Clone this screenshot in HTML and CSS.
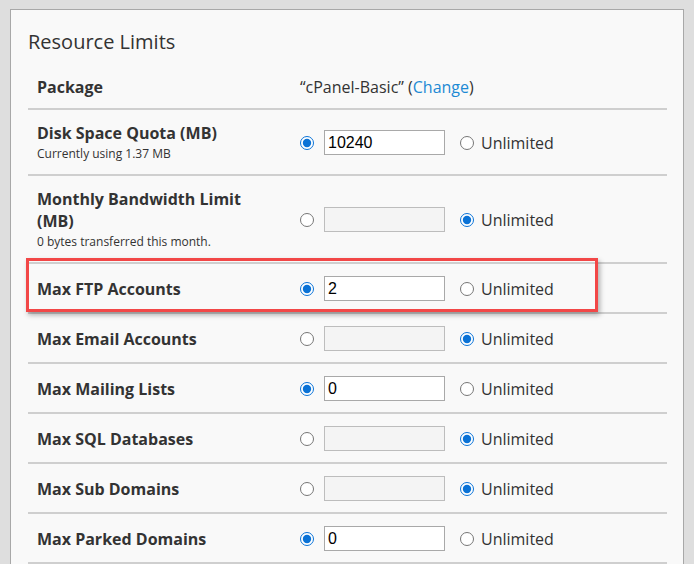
FILE: index.html
```html
<!DOCTYPE html>
<html lang="en">
<head>
    <meta charset="UTF-8">
    <meta name="viewport" content="width=device-width, initial-scale=1.0">
    <title>Resource Limits</title>
    <link rel="stylesheet" href="styles.css">
</head>
<body>
    <div class="panel">
        <h2 class="panel-title">Resource Limits</h2>
        <div class="limits">
            <div class="row row-package">
                <div class="label"><strong>Package</strong></div>
                <div class="value">“cPanel-Basic” (<a href="#">Change</a>)</div>
            </div>
            <div class="row">
                <div class="label">
                    <strong>Disk Space Quota (MB)</strong>
                    <small>Currently using 1.37 MB</small>
                </div>
                <div class="value">
                    <input type="radio" name="disk" checked>
                    <input type="text" class="num" value="10240">
                    <label><input type="radio" name="disk"> Unlimited</label>
                </div>
            </div>
            <div class="row">
                <div class="label">
                    <strong>Monthly Bandwidth Limit (MB)</strong>
                    <small>0 bytes transferred this month.</small>
                </div>
                <div class="value">
                    <input type="radio" name="bw">
                    <input type="text" class="num" disabled>
                    <label><input type="radio" name="bw" checked> Unlimited</label>
                </div>
            </div>
            <div class="row highlight">
                <div class="label"><strong>Max FTP Accounts</strong></div>
                <div class="value">
                    <input type="radio" name="ftp" checked>
                    <input type="text" class="num" value="2">
                    <label><input type="radio" name="ftp"> Unlimited</label>
                </div>
            </div>
            <div class="row">
                <div class="label"><strong>Max Email Accounts</strong></div>
                <div class="value">
                    <input type="radio" name="email">
                    <input type="text" class="num" disabled>
                    <label><input type="radio" name="email" checked> Unlimited</label>
                </div>
            </div>
            <div class="row">
                <div class="label"><strong>Max Mailing Lists</strong></div>
                <div class="value">
                    <input type="radio" name="lists" checked>
                    <input type="text" class="num" value="0">
                    <label><input type="radio" name="lists"> Unlimited</label>
                </div>
            </div>
            <div class="row">
                <div class="label"><strong>Max SQL Databases</strong></div>
                <div class="value">
                    <input type="radio" name="sql">
                    <input type="text" class="num" disabled>
                    <label><input type="radio" name="sql" checked> Unlimited</label>
                </div>
            </div>
            <div class="row">
                <div class="label"><strong>Max Sub Domains</strong></div>
                <div class="value">
                    <input type="radio" name="sub">
                    <input type="text" class="num" disabled>
                    <label><input type="radio" name="sub" checked> Unlimited</label>
                </div>
            </div>
            <div class="row">
                <div class="label"><strong>Max Parked Domains</strong></div>
                <div class="value">
                    <input type="radio" name="parked" checked>
                    <input type="text" class="num" value="0">
                    <label><input type="radio" name="parked"> Unlimited</label>
                </div>
            </div>
        </div>
    </div>
</body>
</html>
```

FILE: styles.css
```css
html {
    overflow: hidden;
}
body {
    font-family: "Open Sans", Arial, sans-serif;
    background-color: #dedede;
    color: #333;
    margin: 9px 10px 0;
}
.panel {
    background: #f9f9f9;
    border: 1px solid #a8a8a8;
    padding: 18px 16px 30px 17px;
}
.panel-title {
    font-size: 20px;
    font-weight: 400;
    line-height: 28px;
    margin: 0 0 8px;
}
.row {
    display: grid;
    grid-template-columns: 263px 1fr;
    align-items: center;
    border-bottom: 2px solid #cfcfcf;
}
.row > div {
    padding: 12px 9px 11px;
}
.row-package > div {
    padding-bottom: 10px;
}
.label strong {
    display: block;
    font-size: 16px;
    font-weight: 700;
    line-height: 22px;
    max-width: 230px;
}
.label small {
    display: block;
    font-size: 12px;
    line-height: 18px;
    margin-top: 1px;
}
.value {
    display: flex;
    align-items: center;
    font-size: 16px;
    line-height: 22px;
}
.value a {
    color: #1d8ad4;
    text-decoration: none;
}
.value input[type="radio"] {
    width: 14px;
    height: 14px;
    margin: 0;
    accent-color: #0a72d6;
}
.value label {
    display: flex;
    align-items: center;
    gap: 7px;
    margin-left: 15px;
}
.num {
    box-sizing: border-box;
    width: 121px;
    height: 25px;
    margin-left: 10px;
    padding: 1px 3px;
    font-family: "Liberation Sans", Arial, sans-serif;
    font-size: 16px;
    color: #000;
    background: #fff;
    border: 1px solid #a9a9a9;
    border-radius: 0;
}
.num:disabled {
    background: #f4f4f4;
    border-color: #bdbdbd;
}
.highlight {
    position: relative;
}
.highlight::after {
    content: "";
    position: absolute;
    left: -2px;
    top: -6px;
    width: 572px;
    bottom: 0;
    box-sizing: border-box;
    border: 3px solid #f24747;
    box-shadow: 2px 3px 5px rgba(0, 0, 0, 0.3);
}
```
